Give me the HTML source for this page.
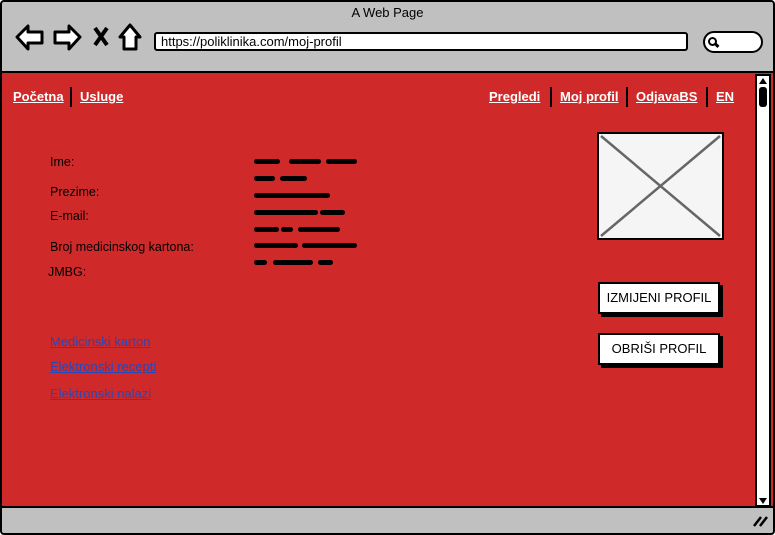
<!DOCTYPE html>
<html><head><meta charset="utf-8"><style>
*{margin:0;padding:0;box-sizing:border-box}
body{width:775px;height:535px;background:#fff;position:relative;overflow:hidden;font-family:"Liberation Sans",sans-serif}
.a{position:absolute}
.nav{color:#fff;font-size:13px;font-weight:bold;text-decoration:underline;top:89px}
.sep{width:2px;height:20px;background:#000;top:87px}
.lbl{font-size:12.5px;color:#000;left:50px}
.s{height:5px;background:#000;border-radius:3px}
.lnk{color:#2747b8;font-size:13px;text-decoration:underline;left:50px}
.btn{background:#fff;border:2px solid #000;box-shadow:3px 3px 0 #000;font-size:13px;text-align:center;line-height:28px;left:598px;width:122px;height:32px}
</style></head><body>
<div class="a" style="left:0;top:0;width:775px;height:535px;background:#c0c0c0;border:2px solid #000;border-radius:4px"></div>
<div class="a" style="left:0;top:5px;width:775px;text-align:center;font-size:13px">A Web Page</div>
<svg class="a" style="left:14px;top:23px" width="135" height="30" viewBox="0 0 135 30">
<path d="M3 14 L14 3 L14 9 L28 9 L28 20 L14 20 L14 26 Z" fill="#fff" stroke="#000" stroke-width="3" stroke-linejoin="round"/>
<path d="M66 14 L55 3 L55 9 L41 9 L41 20 L55 20 L55 26 Z" fill="#fff" stroke="#000" stroke-width="3" stroke-linejoin="round"/>
<path d="M81 5 L93 22 M93 5 L81 22" stroke="#000" stroke-width="4"/>
<path d="M116 2 L106 14 L110 14 L110 26 L122 26 L122 14 L126 14 Z" fill="#fff" stroke="#000" stroke-width="3" stroke-linejoin="round"/>
</svg>
<div class="a" style="left:154px;top:32px;width:534px;height:19px;background:#fff;border:2px solid #000;border-radius:3px;font-size:13px;line-height:15px;padding-left:5px">https://poliklinika.com/moj-profil</div>
<div class="a" style="left:703px;top:31px;width:60px;height:22px;background:#fff;border:2px solid #000;border-radius:11px"></div>
<div class="a" style="left:708px;top:37px;width:9px;height:9px;border:2px solid #000;border-radius:50%"></div>
<div class="a" style="left:715px;top:44px;width:4px;height:3px;background:#000;transform:rotate(45deg)"></div>
<div class="a" style="left:2px;top:71px;width:771px;height:437px;background:#cf2929;border-top:2px solid #000;border-bottom:2px solid #000"></div>
<div class="a" style="left:755px;top:74px;width:16px;height:433px;background:#fff;border:2px solid #000"></div>
<div class="a" style="left:759px;top:78px;width:0;height:0;border-left:4px solid transparent;border-right:4px solid transparent;border-bottom:6px solid #000"></div>
<div class="a" style="left:759px;top:87px;width:8px;height:20px;background:#000;border-radius:3px"></div>
<div class="a" style="left:759px;top:498px;width:0;height:0;border-left:4px solid transparent;border-right:4px solid transparent;border-top:6px solid #000"></div>
<svg class="a" style="left:752px;top:514px" width="16" height="14"><path d="M2 12 L9 3 M8 12 L15 3" stroke="#000" stroke-width="2.5"/></svg>
<div class="a nav" style="left:13px">Početna</div>
<div class="a sep" style="left:70px"></div>
<div class="a nav" style="left:80px">Usluge</div>
<div class="a nav" style="left:489px">Pregledi</div>
<div class="a sep" style="left:550px"></div>
<div class="a nav" style="left:560px">Moj profil</div>
<div class="a sep" style="left:626px"></div>
<div class="a nav" style="left:636px">OdjavaBS</div>
<div class="a sep" style="left:706px"></div>
<div class="a nav" style="left:716px">EN</div>
<div class="a lbl" style="top:155px">Ime:</div>
<div class="a lbl" style="top:185px">Prezime:</div>
<div class="a lbl" style="top:209px">E-mail:</div>
<div class="a lbl" style="top:240px">Broj medicinskog kartona:</div>
<div class="a lbl" style="top:265px;left:48px">JMBG:</div>
<div class="a s" style="left:254px;top:159px;width:26px"></div><div class="a s" style="left:289px;top:159px;width:32px"></div><div class="a s" style="left:326px;top:159px;width:31px"></div>
<div class="a s" style="left:254px;top:176px;width:21px"></div><div class="a s" style="left:280px;top:176px;width:27px"></div>
<div class="a s" style="left:254px;top:193px;width:76px"></div>
<div class="a s" style="left:254px;top:210px;width:64px"></div><div class="a s" style="left:320px;top:210px;width:25px"></div>
<div class="a s" style="left:254px;top:227px;width:25px"></div><div class="a s" style="left:281px;top:227px;width:12px"></div><div class="a s" style="left:298px;top:227px;width:42px"></div>
<div class="a s" style="left:254px;top:243px;width:44px"></div><div class="a s" style="left:302px;top:243px;width:55px"></div>
<div class="a s" style="left:254px;top:260px;width:13px"></div><div class="a s" style="left:273px;top:260px;width:40px"></div><div class="a s" style="left:318px;top:260px;width:15px"></div>
<div class="a lnk" style="top:334px">Medicinski karton</div>
<div class="a lnk" style="top:359px">Elektronski recepti</div>
<div class="a lnk" style="top:386px">Elektronski nalazi</div>
<svg class="a" style="left:597px;top:132px" width="127" height="108"><rect x="1" y="1" width="125" height="106" fill="#f5f5f5" stroke="#000" stroke-width="2"/><path d="M4 4 L123 104 M123 4 L4 104" stroke="#666" stroke-width="2.5"/></svg>
<div class="a btn" style="top:282px">IZMIJENI PROFIL</div>
<div class="a btn" style="top:333px">OBRIŠI PROFIL</div>
</body></html>
